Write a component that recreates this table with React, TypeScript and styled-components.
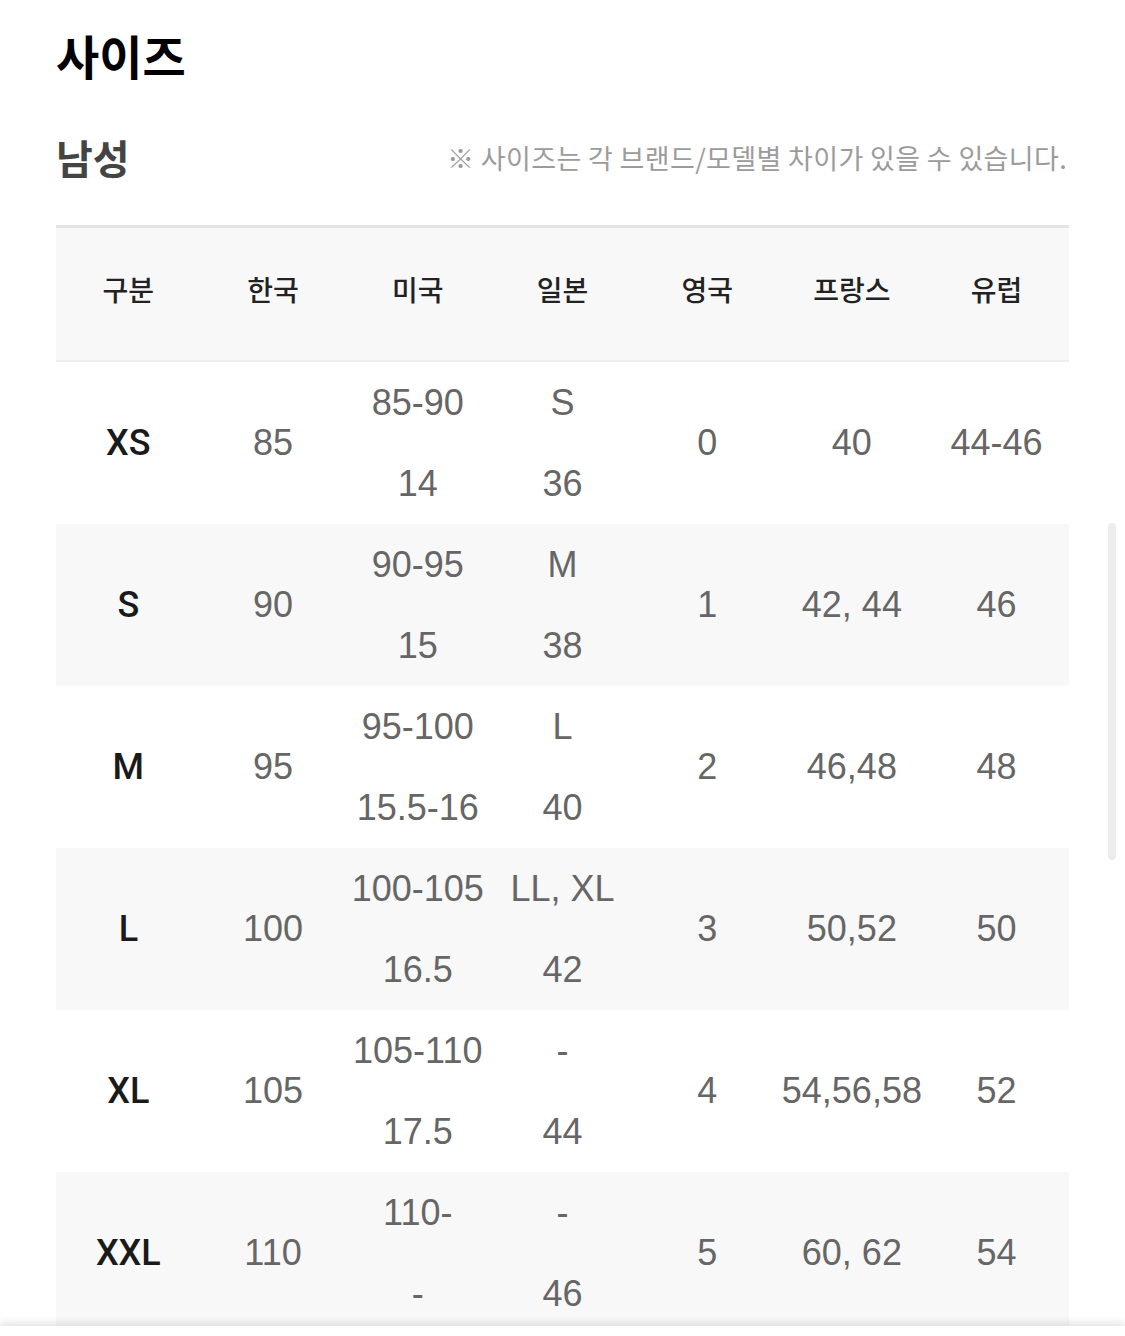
import React from 'react';
import styled, { createGlobalStyle } from 'styled-components';

const GlobalStyle = createGlobalStyle`
  html, body {
    margin: 0;
    padding: 0;
    background: #ffffff;
    overflow: hidden;
  }
  body {
    font-family: "Noto Sans CJK KR", "Noto Sans", sans-serif;
  }
`;

const Page = styled.div`
  position: relative;
  height: 1336px;
  padding: 22px 56px 0;
  box-sizing: border-box;
  overflow: hidden;
`;

const Title = styled.h1`
  margin: 0;
  font-size: 47px;
  line-height: 66px;
  font-weight: 700;
  color: #000;
`;

const SectionHeader = styled.div`
  display: flex;
  align-items: center;
  justify-content: space-between;
  margin-top: 37px;
  height: 64px;
`;

const SubTitle = styled.h2`
  margin: 0;
  font-size: 40px;
  font-weight: 700;
  color: #444;
`;

const Note = styled.p`
  margin: 0;
  padding-right: 2px;
  font-size: 27px;
  font-weight: 400;
  color: #9b9b9b;
  letter-spacing: 0.35px;
`;

const Table = styled.table`
  width: 100%;
  margin-top: 36px;
  border-collapse: collapse;
  table-layout: fixed;
  border-top: 3px solid #e4e4e4;
`;

const HeadRow = styled.tr`
  background: #f8f8f8;
  border-bottom: 2px solid #efefef;
`;

const HeadCell = styled.th`
  height: 122px;
  padding: 0 0 10px;
  font-size: 28px;
  font-weight: 500;
  color: #222;
  text-align: center;
  vertical-align: middle;
`;

const Row = styled.tr<{ $shaded: boolean }>`
  background: ${(p) => (p.$shaded ? '#f8f8f8' : '#ffffff')};
`;

const Cell = styled.td<{ $label?: boolean }>`
  height: 162px;
  padding: 0;
  text-align: center;
  vertical-align: middle;
  font-family: ${(p) => (p.$label ? 'Roboto, "Liberation Sans", sans-serif' : '"Liberation Sans", Arial, sans-serif')};
  font-size: 36px;
  font-weight: ${(p) => (p.$label ? 500 : 400)};
  color: ${(p) => (p.$label ? '#1a1a1a' : '#666')};
  white-space: nowrap;
`;

const Stack = styled.div`
  display: flex;
  flex-direction: column;
  align-items: center;
  gap: 41px;
`;

const Line = styled.span`
  display: block;
  line-height: 40px;
`;

const ScrollThumb = styled.div`
  position: absolute;
  top: 523px;
  right: 9px;
  width: 8px;
  height: 337px;
  border-radius: 4px;
  background: #ececec;
`;

const BottomEdge = styled.div`
  position: absolute;
  left: 0;
  right: 0;
  bottom: 0;
  height: 10px;
  background: #ffffff;
  box-shadow: 0 -3px 8px rgba(0, 0, 0, 0.12);
`;

type SizeRow = {
  label: string;
  kr: string;
  us: [string, string];
  jp: [string, string];
  uk: string;
  fr: string;
  eu: string;
};

const headers = ['구분', '한국', '미국', '일본', '영국', '프랑스', '유럽'];

const rows: SizeRow[] = [
  { label: 'XS', kr: '85', us: ['85-90', '14'], jp: ['S', '36'], uk: '0', fr: '40', eu: '44-46' },
  { label: 'S', kr: '90', us: ['90-95', '15'], jp: ['M', '38'], uk: '1', fr: '42, 44', eu: '46' },
  { label: 'M', kr: '95', us: ['95-100', '15.5-16'], jp: ['L', '40'], uk: '2', fr: '46,48', eu: '48' },
  { label: 'L', kr: '100', us: ['100-105', '16.5'], jp: ['LL, XL', '42'], uk: '3', fr: '50,52', eu: '50' },
  { label: 'XL', kr: '105', us: ['105-110', '17.5'], jp: ['-', '44'], uk: '4', fr: '54,56,58', eu: '52' },
  { label: 'XXL', kr: '110', us: ['110-', '-'], jp: ['-', '46'], uk: '5', fr: '60, 62', eu: '54' },
];

const TwoLine: React.FC<{ values: [string, string] }> = ({ values }) => (
  <Stack>
    <Line>{values[0]}</Line>
    <Line>{values[1]}</Line>
  </Stack>
);

const App: React.FC = () => {
  return (
    <Page>
      <GlobalStyle />
      <Title>사이즈</Title>
      <SectionHeader>
        <SubTitle>남성</SubTitle>
        <Note>※ 사이즈는 각 브랜드/모델별 차이가 있을 수 있습니다.</Note>
      </SectionHeader>
      <Table>
        <thead>
          <HeadRow>
            {headers.map((h) => (
              <HeadCell key={h}>{h}</HeadCell>
            ))}
          </HeadRow>
        </thead>
        <tbody>
          {rows.map((r, i) => (
            <Row key={r.label} $shaded={i % 2 === 1}>
              <Cell $label>{r.label}</Cell>
              <Cell>{r.kr}</Cell>
              <Cell>
                <TwoLine values={r.us} />
              </Cell>
              <Cell>
                <TwoLine values={r.jp} />
              </Cell>
              <Cell>{r.uk}</Cell>
              <Cell>{r.fr}</Cell>
              <Cell>{r.eu}</Cell>
            </Row>
          ))}
        </tbody>
      </Table>
      <ScrollThumb />
      <BottomEdge />
    </Page>
  );
};

export default App;
